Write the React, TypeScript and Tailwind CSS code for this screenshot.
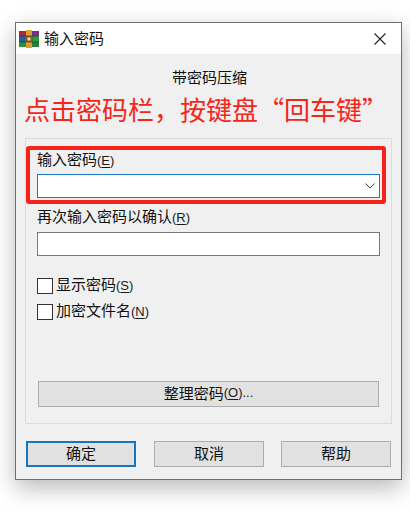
const cjk = "font-['Noto_Sans_CJK_SC','Noto_Sans_CJK_JP',sans-serif]";

function Key({ k }: { k: string }) {
  return (
    <span className="font-['Liberation_Sans',sans-serif] text-[13px] text-[#1a1a1a]">
      (<span className="underline underline-offset-2">{k}</span>)
    </span>
  );
}

function RarIcon() {
  return (
    <svg width="20" height="18" viewBox="0 0 20 18" className="shrink-0">
      <rect x="0" y="1" width="20" height="5" fill="#8a2c6e" />
      <rect x="0" y="6" width="20" height="6" fill="#2f7f3a" />
      <rect x="0" y="12" width="20" height="5" fill="#2c4fa0" />
      <rect x="0" y="1" width="7" height="5" fill="#b3252f" />
      <rect x="13" y="1" width="7" height="5" fill="#7a2f8f" />
      <rect x="0" y="6" width="6" height="6" fill="#1f5fa8" />
      <rect x="14" y="6" width="6" height="6" fill="#2f9a3c" />
      <rect x="0" y="12" width="7" height="5" fill="#2f8f3a" />
      <rect x="13" y="12" width="7" height="5" fill="#27803a" />
      <rect x="7" y="0" width="6" height="18" fill="#d9a02f" />
      <rect x="7" y="6" width="6" height="6" fill="#8f5a22" />
      <rect x="8.5" y="7.5" width="3" height="3" fill="#e8d9a8" />
      <rect x="0" y="5.5" width="20" height="1" fill="#3a2a3a" opacity="0.6" />
      <rect x="0" y="11.5" width="20" height="1" fill="#3a2a3a" opacity="0.6" />
    </svg>
  );
}

function Btn({ children, primary, className = "" }: { children: React.ReactNode; primary?: boolean; className?: string }) {
  return (
    <div
      className={`h-[26px] pb-[2px] flex items-center justify-center bg-[#e1e1e1] text-[15px] text-[#111] ${
        primary ? "border-2 border-[#1874bd]" : "border border-[#adadad]"
      } ${className}`}
    >
      {children}
    </div>
  );
}

function Check({ label, k, className = "" }: { label: string; k: string; className?: string }) {
  return (
    <div className={`flex items-center h-4 ${className}`}>
      <div className="w-4 h-4 bg-white border border-[#333]" />
      <span className="ml-[3px] -translate-y-px text-[15px] leading-5 text-[#111]">
        {label}
        <Key k={k} />
      </span>
    </div>
  );
}

export default function App() {
  return (
    <div className={`w-[410px] h-[531px] bg-white overflow-hidden pt-[22px] pl-[15px] ${cjk}`}>
      <div className="w-[387px] h-[458px] border border-[#6e6e6e] bg-[#f0f0f0] shadow-[0_8px_22px_rgba(0,0,0,0.28)] flex flex-col">
        <div className="h-[31px] bg-white flex items-center pl-[3px] pr-[10px] shrink-0">
          <RarIcon />
          <span className="ml-[5px] text-[15px] text-[#111]">输入密码</span>
          <svg width="12" height="12" viewBox="0 0 12 12" className="ml-auto mr-[5px]">
            <path d="M0.5 0.5 L11.5 11.5 M11.5 0.5 L0.5 11.5" stroke="#222" strokeWidth="1.1" fill="none" />
          </svg>
        </div>
        <div className="px-[9px] flex flex-col flex-1">
          <div className="pt-[13px] pl-[2px] h-[33px] text-center text-[15px] leading-5 text-[#111]">带密码压缩</div>
          <div className="h-[34px] mt-[5px] mb-[12px] -ml-px whitespace-nowrap text-[26px] leading-[34px] text-[#f2271c]">
            点击密码栏，按键盘“回车键”
          </div>
          <div className="relative h-[286px] border border-[#dcdcdc] pt-3 pl-[11px] pr-[11px] flex flex-col">
            <div className="h-5 text-[15px] leading-[16px] text-[#111]">
              输入密码
              <Key k="E" />
            </div>
            <div className="mt-[3px] h-6 bg-white border border-[#1979c4] flex items-center justify-end pr-[4px]">
              <svg width="10" height="6" viewBox="0 0 10 6">
                <path d="M0.5 0.5 L5 5 L9.5 0.5" stroke="#444" strokeWidth="1" fill="none" />
              </svg>
            </div>
            <div className="mt-[10px] h-5 text-[15px] leading-[15px] text-[#111]">
              再次输入密码以确认
              <Key k="R" />
            </div>
            <div className="mt-1 h-6 bg-white border border-[#7a7a7a]" />
            <Check label="显示密码" k="S" className="mt-[22px]" />
            <Check label="加密文件名" k="N" className="mt-[10px]" />
            <Btn className="mt-[61px] mx-px">
              整理密码
              <Key k="O" />
              <span className="font-['Liberation_Sans',sans-serif] text-[13px]">...</span>
            </Btn>
            <div className="absolute left-0 top-[7px] w-[360px] h-[58px] border-4 border-[#f5231a] rounded-[3px]" />
          </div>
          <div className="mt-[17px] ml-px flex">
            <Btn primary className="w-[110px]">确定</Btn>
            <Btn className="w-[110px] ml-[18px]">取消</Btn>
            <Btn className="w-[110px] ml-[17px]">帮助</Btn>
          </div>
        </div>
      </div>
    </div>
  );
}
